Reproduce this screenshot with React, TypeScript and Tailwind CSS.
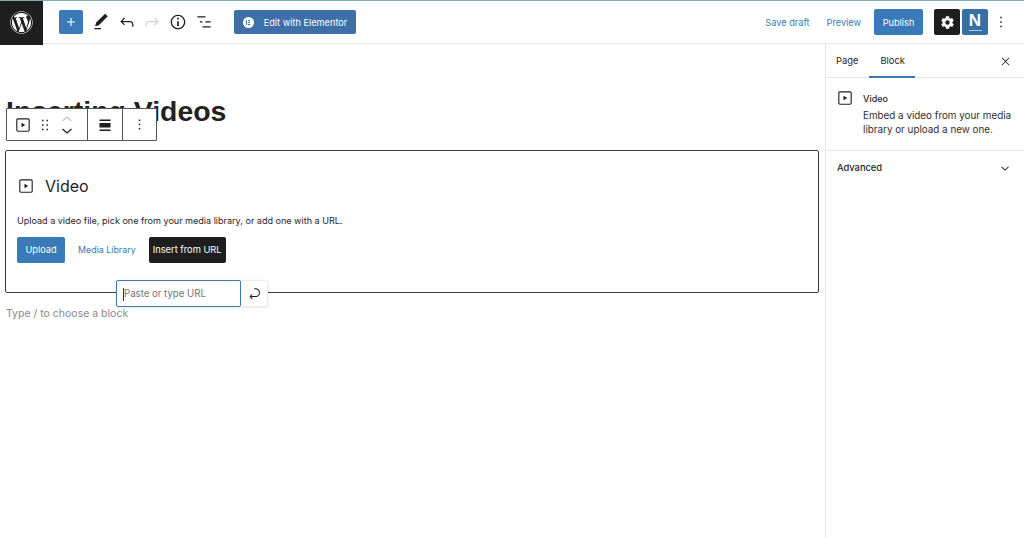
import React from "react";
import { FaWordpress } from "react-icons/fa";

const Play = ({ size = 24, className = "" }: { size?: number; className?: string }) => (
  <svg width={size} height={size} viewBox="0 0 24 24" className={className} fill="#1e1e1e">
    <path d="M18.7 3H5.3C4 3 3 4 3 5.3v13.4C3 20 4 21 5.3 21h13.4c1.300 0 2.300-1 2.300-2.300V5.300C21 4 20 3 18.700 3zm.8 15.700c0 .4-.4.8-.8.8H5.300c-.4 0-.8-.4-.8-.8V5.300c0-.4.4-.8.8-.8h13.400c.4 0 .8.4.8.8v13.400zM10 15l5-3-5-3v6z" />
  </svg>
);

export default function App() {
  return (
    <div className="w-[1024px] h-[538px] overflow-hidden bg-white flex flex-col font-['Inter','Liberation_Sans',sans-serif] text-[#1e1e1e]">
      <div className="h-px bg-[#7fa9ab] shrink-0" />
      <header className="h-[43px] shrink-0 flex items-center border-b border-[#e6e6e6]">
        <div className="w-[43px] h-[44px] -mb-px bg-[#1e1e1e] flex items-center justify-center text-white">
          <FaWordpress size={23} />
        </div>
        <button className="ml-4 w-6 h-6 rounded-[2px] bg-[#3a7ab8] flex items-center justify-center">
          <svg width="16" height="16" viewBox="0 0 24 24" fill="white"><path d="M18 11.200h-5.200V6h-1.600v5.200H6v1.600h5.200V18h1.600v-5.200H18z" /></svg>
        </button>
        <svg className="ml-[8px]" width="20" height="20" viewBox="0 0 24 24" fill="#1e1e1e">
          <path d="M20.100 5.100 16.900 2 6.200 12.700l-1.300 4.400 4.500-1.300L20.100 5.100zM4 20.800h8v-1.500H4v1.500z" />
        </svg>
        <svg className="ml-[6px]" width="20" height="20" viewBox="0 0 24 24" fill="#1e1e1e">
          <path d="M18.300 11.700c-.6-.6-1.400-.9-2.300-.9H6.700l2.900-3.300-1.100-1-4.500 5L8.500 16l1-1-2.700-2.700H16c.5 0 .9.2 1.300.5 1 1 1 3.400 1 4.500v.3h1.500v-.2c0-1.500 0-4.300-1.500-5.700z" />
        </svg>
        <svg className="ml-[5px]" width="20" height="20" viewBox="0 0 24 24" fill="#d0d0d0">
          <path d="M15.600 6.500l-1.100 1 2.900 3.300H8c-.9 0-1.700.3-2.300.9-1.400 1.500-1.400 4.200-1.400 5.600v.2h1.500v-.3c0-1.100 0-3.500 1-4.500.3-.3.7-.5 1.300-.5h9.200L14.500 15l1.100 1.100 4.600-4.600-4.600-5z" />
        </svg>
        <svg className="ml-[6px]" width="20" height="20" viewBox="0 0 24 24" fill="#1e1e1e">
          <path d="M12 3.200c-4.800 0-8.800 3.900-8.800 8.800 0 4.800 3.900 8.800 8.800 8.800 4.800 0 8.800-3.900 8.800-8.800 0-4.800-4-8.800-8.800-8.800zm0 16c-4 0-7.200-3.300-7.200-7.200C4.800 8 8 4.800 12 4.800s7.200 3.300 7.200 7.200c0 4-3.200 7.200-7.200 7.200zM11 17h2v-6h-2v6zm0-8h2V7h-2v2z" />
        </svg>
        <svg className="ml-[6px]" width="20" height="20" viewBox="0 0 24 24" fill="#1e1e1e">
          <path d="M13.800 5.200H4v1.500h9.800V5.200zm-3.600 6H7v1.500h3.200v-1.500zm9.800 6h-9.800v1.500H20v-1.500zM20 11.200h-6.500v1.500H20v-1.500z" />
        </svg>
        <button className="ml-[20px] w-[122px] h-6 rounded-[2px] bg-[#3d6fa8] flex items-center justify-center gap-[7px] text-white text-[9.2px]">
          <span className="w-[11px] h-[11px] rounded-full bg-white flex items-center justify-center gap-[1px]">
            <span className="w-px h-[5px] bg-[#3d6fa8]" />
            <span className="w-[2px] h-[5px] flex flex-col justify-between">
              <span className="h-px bg-[#3d6fa8]" />
              <span className="h-px bg-[#3d6fa8]" />
              <span className="h-px bg-[#3d6fa8]" />
            </span>
          </span>
          <span className="ml-[3px] pt-[1px]">Edit with Elementor</span>
        </button>
        <div className="flex-1" />
        <span className="text-[9.2px] text-[#3a7ab8] pt-[1px]">Save draft</span>
        <span className="ml-[17px] text-[9.2px] text-[#3a7ab8] pt-[1px]">Preview</span>
        <button className="ml-[13px] w-[49px] h-[26px] rounded-[2px] bg-[#3a7ab8] text-white text-[9.2px] pt-[1px]">Publish</button>
        <button className="ml-[11px] w-[26px] h-[26px] rounded-[2px] bg-[#1e1e1e] flex items-center justify-center">
          <svg width="15" height="15" viewBox="0 0 24 24" fill="white">
            <path fillRule="evenodd" d="M14.500 2h-5l-.5 2.900a7.600 7.600 0 0 0-1.700 1L4.500 4.800 2 9.200l2.300 1.900a7.600 7.600 0 0 0 0 1.900L2 14.800l2.500 4.400 2.800-1.100c.5.4 1.100.7 1.700 1l.5 2.900h5l.5-2.900c.6-.3 1.200-.6 1.700-1l2.800 1.100 2.500-4.400-2.300-1.900a7.600 7.600 0 0 0 0-1.900L22 9.200l-2.500-4.400-2.800 1.100c-.5-.4-1.100-.7-1.700-1L14.500 2zM12 15.500a3.500 3.500 0 1 1 0-7 3.500 3.500 0 0 1 0 7z" />
          </svg>
        </button>
        <button className="ml-[2px] w-[26px] h-[26px] rounded-[2px] bg-[#3670a6] flex flex-col items-center justify-center text-white">
          <span className="font-['Liberation_Sans',sans-serif] font-bold text-[17px] leading-[16px]">N</span>
          <span className="w-[13px] h-px bg-white/60 mt-[1px]" />
        </button>
        <svg className="ml-[4px] mr-[14px]" width="18" height="18" viewBox="0 0 24 24" fill="#1e1e1e"><path d="M13 19h-2v-2h2v2zm0-6h-2v-2h2v2zm0-6h-2V5h2v2z" /></svg>
      </header>

      <div className="flex-1 flex min-h-0">
        <main className="relative flex-1 min-w-0">
          <h1 className="absolute left-[6px] top-[50px] font-['Liberation_Sans',sans-serif] font-bold text-[28.4px] leading-[34px] whitespace-nowrap text-[#222]">Inserting Videos</h1>

          <div className="absolute left-[6px] top-[64px] h-[33px] w-[151px] flex bg-white border border-[#555] rounded-[1px]">
            <div className="w-[81px] flex items-center border-r border-[#555] pl-[7px]">
              <Play size={18} />
              <svg className="ml-[4px]" width="18" height="18" viewBox="0 0 24 24" fill="#1e1e1e"><path d="M8 7h2V5H8v2zm0 6h2v-2H8v2zm0 6h2v-2H8v2zm6-14v2h2V5h-2zm0 8h2v-2h-2v2zm0 6h2v-2h-2v2z" /></svg>
              <div className="ml-[5px] flex flex-col items-center">
                <svg width="16" height="12" viewBox="0 0 16 12" fill="none" stroke="#c4c4c4" strokeWidth="1.3"><path d="M3.500 8 8 4l4.500 4" /></svg>
                <svg width="16" height="12" viewBox="0 0 16 12" fill="none" stroke="#1e1e1e" strokeWidth="1.3"><path d="M3.500 4 8 8l4.500-4" /></svg>
              </div>
            </div>
            <div className="w-[35px] flex items-center justify-center border-r border-[#555]">
              <svg width="24" height="24" viewBox="0 0 24 24" fill="#1e1e1e"><path d="M6.500 6.500h11V8h-11zM6.500 10h11v4.500h-11zM6.500 16.500h11V18h-11z" /></svg>
            </div>
            <div className="flex-1 flex items-center justify-center">
              <svg width="17" height="17" viewBox="0 0 24 24" fill="#1e1e1e"><path d="M13 19h-2v-2h2v2zm0-6h-2v-2h2v2zm0-6h-2V5h2v2z" /></svg>
            </div>
          </div>

          <div className="pt-[106px] pl-[5px] pr-[6px]">
            <section className="h-[143px] border border-[#3c3c3c] rounded-[2px] px-[11px] pt-[23px]">
              <div className="flex items-center h-[24px]">
                <Play size={18} />
                <span className="ml-[10px] text-[16px]">Video</span>
              </div>
              <p className="mt-[15px] text-[9.05px] leading-[16px]">Upload a video file, pick one from your media library, or add one with a URL.</p>
              <div className="mt-[8px] flex items-center">
                <button className="w-[48px] h-[26px] rounded-[2px] bg-[#3a7ab8] text-white text-[9.2px]">Upload</button>
                <span className="ml-[13px] text-[8.9px] text-[#3a7ab8]">Media Library</span>
                <button className="ml-[13px] w-[77px] h-[26px] rounded-[2px] bg-[#1e1e1e] text-white text-[9.3px]">Insert from URL</button>
              </div>
            </section>
            <p className="mt-[13px] text-[#8a8a8a] text-[10.5px] leading-[16px] pl-px">Type / to choose a block</p>
          </div>

          <div className="absolute left-[116px] top-[236px] w-[152px] h-[27px] flex bg-white border border-[#ececec] rounded-[2px] shadow-[0_1px_3px_rgba(0,0,0,0.1)]">
            <div className="w-[125px] -ml-px -my-px h-[27px] border border-[#3a7ab8] rounded-[2px] bg-white flex items-center pl-[6px] pt-[1px] text-[9.65px] text-[#757575]">
              <span className="w-px h-[13px] bg-[#333]" />Paste or type URL
            </div>
            <div className="flex-1 flex items-center justify-center">
              <svg width="15" height="15" viewBox="0 0 24 24" fill="#1e1e1e"><path d="M6.734 16.106l2.176-2.38-1.093-1.028-3.846 4.158 3.846 4.157 1.093-1.027-2.176-2.38h2.811c1.125 0 2.25.03 3.374 0 1.428-.001 3.362-.25 4.963-1.277 1.66-1.065 2.868-2.906 2.868-5.859 0-2.479-1.327-4.896-3.65-5.93-1.82-.813-3.44-.8-5.07-.788l-.567.002v1.5c.184 0 .368 0 .553-.002 1.598-.012 2.923-.022 4.47.668 1.707.76 2.764 2.56 2.764 4.55 0 2.425-.938 3.815-2.162 4.603-1.26.807-2.864 1.022-4.155 1.022-1.125.03-2.25 0-3.373 0h-2.826z" /></svg>
            </div>
          </div>
        </main>

        <aside className="w-[199px] shrink-0 border-l border-[#e6e6e6] flex flex-col text-[9.4px]">
          <div className="h-[34px] flex items-center border-b border-[#e6e6e6] relative pt-[1px]">
            <span className="ml-[10px]">Page</span>
            <span className="ml-[22px]">Block</span>
            <span className="absolute left-[43px] bottom-[-1px] w-[46px] h-[2px] bg-[#3a7ab8]" />
            <svg className="ml-auto mr-[12px]" width="13" height="13" viewBox="0 0 24 24" fill="#1e1e1e"><path d="M13 11.800l6.100-6.300-1-1-6.100 6.200-6.100-6.200-1 1 6.100 6.300-6.500 6.700 1 1 6.500-6.600 6.500 6.600 1-1z" /></svg>
          </div>
          <div className="h-[73px] flex pl-[10px] pt-[11px] border-b border-[#e6e6e6]">
            <Play size={18} />
            <div className="ml-[9px] mt-[3px]">
              <div className="leading-[13px] text-[9px] font-medium">Video</div>
              <div className="mt-[4px] leading-[13.5px] text-[9.85px] text-[#2f2f2f]">Embed a video from your media<br />library or upload a new one.</div>
            </div>
          </div>
          <div className="h-[34px] flex items-center pl-[11px] pr-[12px] justify-between">
            <span className="font-medium text-[9.3px]">Advanced</span>
            <svg width="14" height="14" viewBox="0 0 24 24" fill="#1e1e1e"><path d="M17.500 9.500 12 14.500l-5.500-5-1 1.100 6.500 6 6.500-6z" /></svg>
          </div>
        </aside>
      </div>
    </div>
  );
}
